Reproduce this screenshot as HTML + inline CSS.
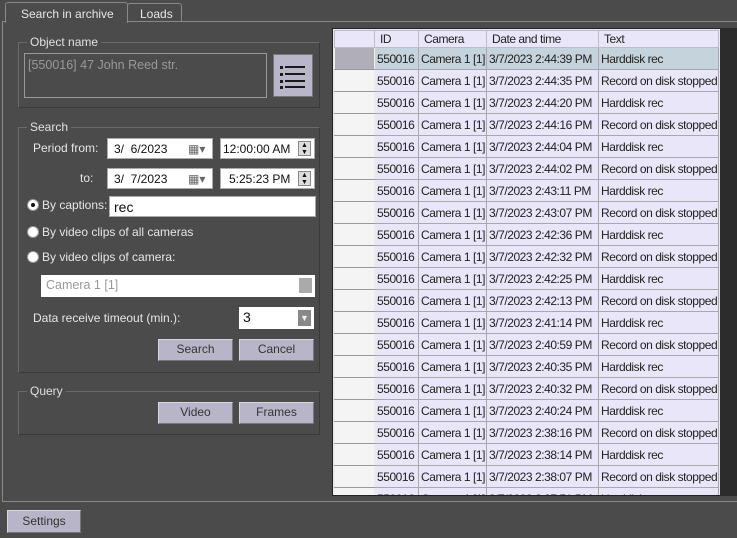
<!DOCTYPE html><html><head><style>
*{box-sizing:border-box;margin:0;padding:0}
body{width:737px;height:538px;background:#4b4b4b;font-family:"Liberation Sans",sans-serif;font-size:12px;color:#e6e6e6;position:relative;overflow:hidden}
.a{position:absolute}
.grp{position:absolute;border:1px solid #6a6a6a;border-right-color:#3a3a3a;border-bottom-color:#3a3a3a}
.gl{position:absolute;background:#4b4b4b;padding:0 3px;top:-8px;left:8px;color:#e0e0e0}
.in{position:absolute;background:#fff;color:#111;border:1px solid #aaa;padding-left:4px;line-height:20px}
.btn{position:absolute;background:#b9b5c8;border:1px solid #d8d6e2;border-right-color:#777;border-bottom-color:#777;color:#333;text-align:center;line-height:19px}
.rad{position:absolute;width:12px;height:12px;border-radius:50%;background:#fff;border:1px solid #999}
table{border-collapse:collapse;position:absolute;width:384px;font-size:12px;letter-spacing:-0.45px;color:#222;table-layout:fixed}
td{height:22px;border:1px solid #a8a8b0;padding-left:2px;background:#e8e6f8;white-space:nowrap;overflow:hidden}
tr.h td{height:17px;background:#e8e6f8;border-color:#bcbcc8;padding-left:5px}
td.rh{background:#f4f4f4;border-color:#999 #eee}
tr.s td{background:#c5d3dc}
tr.s td.rh{background:#b0aeb8}
</style></head><body>
<div class="a" style="left:2px;top:21px;width:740px;height:481px;border:1px solid #888"></div>
<div class="a" style="left:5px;top:2px;width:123px;height:21px;background:#4b4b4b;border:1px solid #888;border-bottom:none;border-radius:3px 3px 0 0;padding:4px 0 0 15px">Search in archive</div>
<div class="a" style="left:127px;top:3px;width:55px;height:18px;border:1px solid #888;border-bottom:none;border-radius:3px 3px 0 0;padding:3px 0 0 12px">Loads</div>

<div class="grp" style="left:18px;top:42px;width:302px;height:66px"><span class="gl">Object name</span></div>
<div class="a" style="left:24px;top:53px;width:243px;height:45px;border:1px solid #999;color:#999;padding:4px 3px;font-size:12.5px">[550016] 47 John Reed str.</div>
<div class="a" style="left:273px;top:54px;width:40px;height:43px;background:#bab6ca;border:1px solid #777">
<svg width="40" height="43"><g fill="#1a1a1a"><rect x="6" y="11" width="3" height="3"/><rect x="6" y="18" width="3" height="3"/><rect x="6" y="25" width="3" height="3"/><rect x="6" y="31" width="3" height="3"/><rect x="11" y="11" width="20" height="2"/><rect x="11" y="18" width="20" height="2"/><rect x="11" y="25" width="20" height="2"/><rect x="11" y="31" width="20" height="2"/></g></svg></div>

<div class="grp" style="left:18px;top:127px;width:302px;height:246px"><span class="gl">Search</span></div>
<div class="a" style="left:33px;top:141px">Period from:</div>
<div class="a" style="left:80px;top:171px">to:</div>
<div class="in" style="left:107px;top:138px;width:106px;height:21px;padding-left:6px">3/&nbsp; 6/2023 <span style="position:absolute;left:80px;color:#666">▦▾</span></div>
<div class="in" style="left:220px;top:138px;width:95px;height:21px;padding-left:2px">12:00:00 AM<span style="position:absolute;right:3px;top:2px;width:13px;height:15px;background:#ddd;border:1px solid #888;font-size:7px;line-height:7px;text-align:center">▲<br>▼</span></div>
<div class="in" style="left:107px;top:168px;width:106px;height:21px;padding-left:6px">3/&nbsp; 7/2023 <span style="position:absolute;left:80px;color:#666">▦▾</span></div>
<div class="in" style="left:220px;top:168px;width:95px;height:21px;padding-left:8px">5:25:23 PM<span style="position:absolute;right:3px;top:2px;width:13px;height:15px;background:#ddd;border:1px solid #888;font-size:7px;line-height:7px;text-align:center">▲<br>▼</span></div>
<div class="rad" style="left:27px;top:199px"><div style="width:4px;height:4px;background:#111;border-radius:50%;margin:3px"></div></div>
<div class="a" style="left:42px;top:198px">By captions:</div>
<div class="in" style="left:109px;top:196px;width:207px;height:21px;font-size:14px">rec</div>
<div class="rad" style="left:27px;top:226px"></div>
<div class="a" style="left:42px;top:225px">By video clips of all cameras</div>
<div class="rad" style="left:27px;top:251px"></div>
<div class="a" style="left:42px;top:250px">By video clips of camera:</div>
<div class="in" style="left:41px;top:275px;width:274px;height:22px;border:none;color:#999;padding-left:5px;font-size:12.5px">Camera 1 [1]<span style="position:absolute;right:3px;top:3px;width:13px;height:15px;background:#aaa"></span></div>
<div class="a" style="left:33px;top:311px">Data receive timeout (min.):</div>
<div class="in" style="left:239px;top:307px;width:75px;height:22px;border:none;font-size:14px;padding-left:4px">3<span style="position:absolute;right:3px;top:3px;width:13px;height:16px;background:#888;color:#eee;font-size:9px;text-align:center;line-height:16px">▼</span></div>
<div class="btn" style="left:158px;top:339px;width:75px;height:22px">Search</div>
<div class="btn" style="left:239px;top:339px;width:75px;height:22px">Cancel</div>

<div class="grp" style="left:18px;top:391px;width:302px;height:44px"><span class="gl">Query</span></div>
<div class="btn" style="left:158px;top:402px;width:75px;height:22px">Video</div>
<div class="btn" style="left:239px;top:402px;width:75px;height:22px">Frames</div>

<div class="a" style="left:332px;top:28px;width:390px;height:468px;background:#e8e6f8;border:1px solid #222;overflow:hidden"></div>
<div class="a" style="left:720px;top:28px;width:17px;height:468px;background:#2c2c2c"></div>
<div class="a" style="left:333px;top:29px;width:387px;height:466px;overflow:hidden">
<table style="left:1px;top:1px"><colgroup><col style="width:40px"><col style="width:44px"><col style="width:68px"><col style="width:112px"><col style="width:120px"></colgroup>
<tr class="h"><td></td><td>ID</td><td>Camera</td><td>Date and time</td><td>Text</td></tr>
<tr class="s"><td class="rh"></td><td>550016</td><td>Camera 1 [1]</td><td>3/7/2023 2:44:39 PM</td><td>Harddisk rec</td></tr>
<tr><td class="rh"></td><td>550016</td><td>Camera 1 [1]</td><td>3/7/2023 2:44:35 PM</td><td>Record on disk stopped</td></tr>
<tr><td class="rh"></td><td>550016</td><td>Camera 1 [1]</td><td>3/7/2023 2:44:20 PM</td><td>Harddisk rec</td></tr>
<tr><td class="rh"></td><td>550016</td><td>Camera 1 [1]</td><td>3/7/2023 2:44:16 PM</td><td>Record on disk stopped</td></tr>
<tr><td class="rh"></td><td>550016</td><td>Camera 1 [1]</td><td>3/7/2023 2:44:04 PM</td><td>Harddisk rec</td></tr>
<tr><td class="rh"></td><td>550016</td><td>Camera 1 [1]</td><td>3/7/2023 2:44:02 PM</td><td>Record on disk stopped</td></tr>
<tr><td class="rh"></td><td>550016</td><td>Camera 1 [1]</td><td>3/7/2023 2:43:11 PM</td><td>Harddisk rec</td></tr>
<tr><td class="rh"></td><td>550016</td><td>Camera 1 [1]</td><td>3/7/2023 2:43:07 PM</td><td>Record on disk stopped</td></tr>
<tr><td class="rh"></td><td>550016</td><td>Camera 1 [1]</td><td>3/7/2023 2:42:36 PM</td><td>Harddisk rec</td></tr>
<tr><td class="rh"></td><td>550016</td><td>Camera 1 [1]</td><td>3/7/2023 2:42:32 PM</td><td>Record on disk stopped</td></tr>
<tr><td class="rh"></td><td>550016</td><td>Camera 1 [1]</td><td>3/7/2023 2:42:25 PM</td><td>Harddisk rec</td></tr>
<tr><td class="rh"></td><td>550016</td><td>Camera 1 [1]</td><td>3/7/2023 2:42:13 PM</td><td>Record on disk stopped</td></tr>
<tr><td class="rh"></td><td>550016</td><td>Camera 1 [1]</td><td>3/7/2023 2:41:14 PM</td><td>Harddisk rec</td></tr>
<tr><td class="rh"></td><td>550016</td><td>Camera 1 [1]</td><td>3/7/2023 2:40:59 PM</td><td>Record on disk stopped</td></tr>
<tr><td class="rh"></td><td>550016</td><td>Camera 1 [1]</td><td>3/7/2023 2:40:35 PM</td><td>Harddisk rec</td></tr>
<tr><td class="rh"></td><td>550016</td><td>Camera 1 [1]</td><td>3/7/2023 2:40:32 PM</td><td>Record on disk stopped</td></tr>
<tr><td class="rh"></td><td>550016</td><td>Camera 1 [1]</td><td>3/7/2023 2:40:24 PM</td><td>Harddisk rec</td></tr>
<tr><td class="rh"></td><td>550016</td><td>Camera 1 [1]</td><td>3/7/2023 2:38:16 PM</td><td>Record on disk stopped</td></tr>
<tr><td class="rh"></td><td>550016</td><td>Camera 1 [1]</td><td>3/7/2023 2:38:14 PM</td><td>Harddisk rec</td></tr>
<tr><td class="rh"></td><td>550016</td><td>Camera 1 [1]</td><td>3/7/2023 2:38:07 PM</td><td>Record on disk stopped</td></tr>
<tr><td class="rh"></td><td>550016</td><td>Camera 1 [1]</td><td>3/7/2023 2:37:51 PM</td><td>Harddisk rec</td></tr>
</table></div>

<div class="btn" style="left:7px;top:510px;width:74px;height:23px;line-height:21px">Settings</div>
</body></html>
